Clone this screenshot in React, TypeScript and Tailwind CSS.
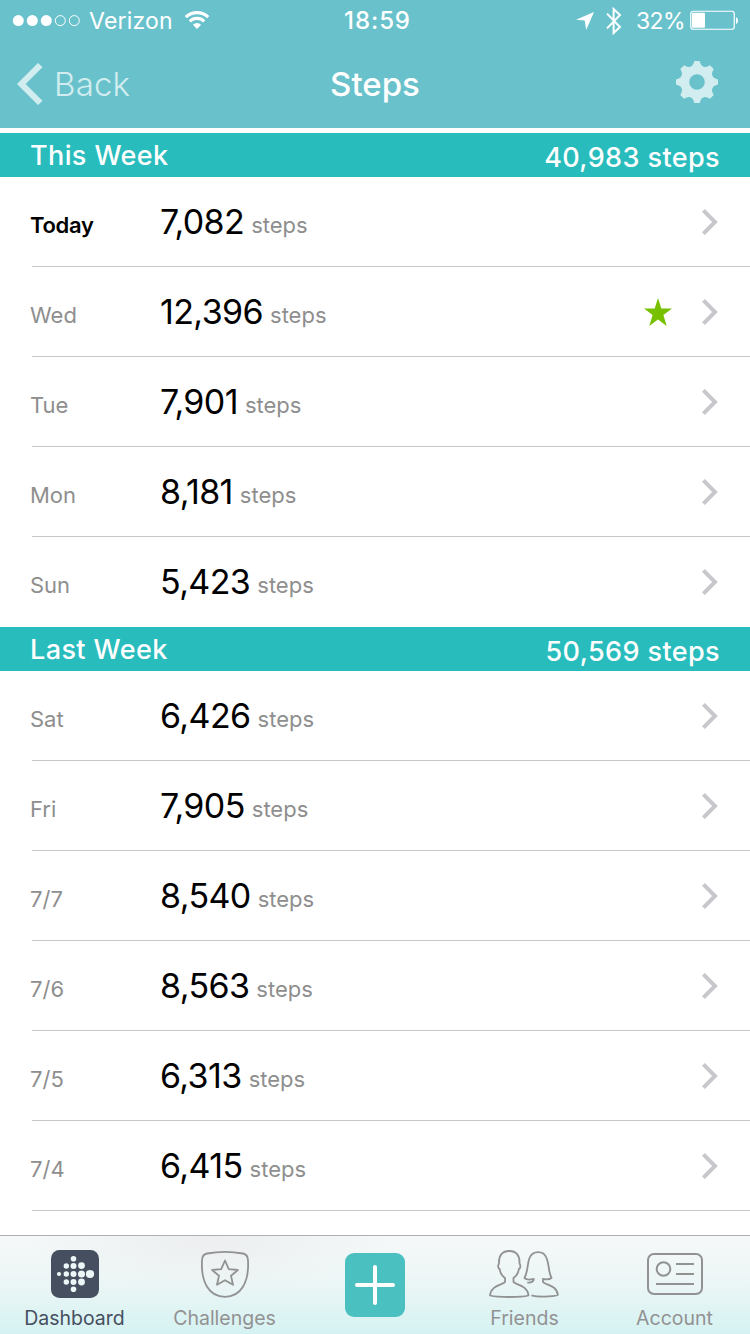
import type { ReactNode } from 'react';

interface DayEntry {
  day: string;
  steps: string;
  isToday?: boolean;
  goalMet?: boolean;
}

interface Week {
  title: string;
  total: string;
  days: DayEntry[];
}

const WEEKS: Week[] = [
  {
    title: 'This Week',
    total: '40,983 steps',
    days: [
      { day: 'Today', steps: '7,082', isToday: true },
      { day: 'Wed', steps: '12,396', goalMet: true },
      { day: 'Tue', steps: '7,901' },
      { day: 'Mon', steps: '8,181' },
      { day: 'Sun', steps: '5,423' },
    ],
  },
  {
    title: 'Last Week',
    total: '50,569 steps',
    days: [
      { day: 'Sat', steps: '6,426' },
      { day: 'Fri', steps: '7,905' },
      { day: '7/7', steps: '8,540' },
      { day: '7/6', steps: '8,563' },
      { day: '7/5', steps: '6,313' },
      { day: '7/4', steps: '6,415' },
    ],
  },
];

function StatusBar() {
  return (
    <div className="grid grid-cols-[1fr_auto_1fr] items-center h-10 pl-3 pr-[11px] text-white">
      <div className="flex items-center">
        <svg className="-mt-px" width="70" height="14" viewBox="0 0 70 14" fill="none" stroke="white">
          <circle cx="6.3" cy="7.6" r="5.5" fill="white" stroke="none" />
          <circle cx="20.3" cy="7.6" r="5.5" fill="white" stroke="none" />
          <circle cx="34.3" cy="7.6" r="5.5" fill="white" stroke="none" />
          <circle cx="48.3" cy="7.6" r="5" />
          <circle cx="62.3" cy="7.6" r="5" />
        </svg>
        <span className="ml-[7px] pt-px text-[23px] tracking-[0.2px] leading-10">Verizon</span>
        <svg className="ml-[11px] -mt-px" width="26" height="20" viewBox="0 0 26 20" fill="none" stroke="white" strokeWidth="3.2">
          <path d="M1.8 7.2A16 16 0 0 1 24.2 7.2" />
          <path d="M5.8 11.4A10.3 10.3 0 0 1 20.2 11.4" />
          <path d="M13 19L8.9 14.8A5.8 5.8 0 0 1 17.1 14.8Z" fill="white" stroke="none" />
        </svg>
      </div>
      <span className="pt-px pl-1 text-[24px] font-medium tracking-[0.9px] leading-10">18:59</span>
      <div className="flex items-center justify-end">
        <svg className="mt-px" width="18" height="18" viewBox="0 0 18 18" fill="white">
          <path d="M18 0L10.2 18L8.7 8.6L0 7.8Z" />
        </svg>
        <svg className="ml-3" width="16" height="28" viewBox="0 0 16 28" fill="none" stroke="white" strokeWidth="2">
          <path d="M1 6.6L14 20L7.6 26V2L14 8L1 21.4" />
        </svg>
        <span className="ml-3.5 pt-px text-[23px] tracking-[-0.6px] leading-10">32%</span>
        <svg className="ml-[5px] -mt-px" width="49" height="20" viewBox="0 0 49 20" fill="none">
          <rect x="0.75" y="1.25" width="43.5" height="18" rx="2.5" stroke="white" strokeWidth="1.2" />
          <rect x="2" y="2.8" width="13" height="15" rx="1" fill="white" />
          <path d="M46 7A4 4 0 0 1 46 14Z" fill="white" />
        </svg>
      </div>
    </div>
  );
}

function GearIcon() {
  return (
    <svg width="42" height="42" viewBox="-21 -21 42 42">
      <circle r="12" fill="none" stroke="#d2edef" strokeWidth="8.4" />
      {[0, 45, 90, 135, 180, 225, 270, 315].map((angle) => (
        <path
          key={angle}
          transform={`rotate(${angle})`}
          d="M-2.6 -21H2.6L3.6 -18.2Q4.3 -15.8 7.6 -14.6L5 -11H-5L-7.6 -14.6Q-4.3 -15.8 -3.6 -18.2Z"
          fill="#d2edef"
        />
      ))}
    </svg>
  );
}

function NavBar() {
  return (
    <div className="grid grid-cols-[1fr_auto_1fr] items-center h-[88px] pl-[17px] pr-8">
      <div className="flex items-center text-[#d2edef]">
        <svg width="26" height="42" viewBox="0 0 26 42" fill="currentColor">
          <path d="M21 0L25.5 4.3L8.6 21L25.5 37.7L21 42L0 21Z" />
        </svg>
        <span className="ml-[11px] font-[350] text-[33px] tracking-[0.2px] leading-[42px]">Back</span>
      </div>
      <h1 className="pl-[15px] font-medium text-[33px] leading-[42px] text-white">Steps</h1>
      <div className="flex justify-end pb-1">
        <GearIcon />
      </div>
    </div>
  );
}

function WeekHeader({ title, total }: { title: string; total: string }) {
  return (
    <div className="flex justify-between h-11 pl-[30px] pr-[31px] bg-[#28bcbd] text-white font-medium text-[27px] tracking-[0.4px] leading-[46px]">
      <h2>{title}</h2>
      <span className="pt-0.5 -mr-px">{total}</span>
    </div>
  );
}

function DayRow({ entry, last }: { entry: DayEntry; last: boolean }) {
  return (
    <li className="flex pl-8 h-[90px]">
      <div className={`flex flex-1 items-center pr-8 border-b ${last ? 'border-transparent' : 'border-[#c8c7cc]'}`}>
        <div className="flex flex-1 items-baseline -ml-0.5">
          <span className={`w-[130px] -translate-y-px text-[22px] ${entry.isToday ? 'font-semibold tracking-[-0.3px] text-black' : 'text-[#8e8e8e]'}`}>
            {entry.day}
          </span>
          <span className="text-[34px] text-black leading-[50px] tracking-[-0.6px]">{entry.steps}</span>
          <span className="ml-[7px] -translate-y-px text-[22px] text-[#8e8e8e]">steps</span>
        </div>
        {entry.goalMet && (
          <svg className="mr-[30px]" width="28" height="28" viewBox="0 0 28 28" fill="#76c000">
            <path d="M14 0L17.3 10.4H28L19.4 17L22.7 28L14 21.4L5.3 28L8.6 17L0 10.4H10.7Z" />
          </svg>
        )}
        <svg width="16" height="26" viewBox="0 0 16 26" fill="none" stroke="#c7c7cc" strokeWidth="4">
          <path d="M1.4 1.4L13 13L1.4 24.6" />
        </svg>
      </div>
    </li>
  );
}

function DashboardIcon() {
  return (
    <svg width="48" height="48" viewBox="0 0 48 48" fill="#edf7f8">
      <rect width="48" height="48" rx="8.5" fill="#464f5f" />
      <circle cx="8" cy="24" r="2.1" />
      <circle cx="15.3" cy="16" r="2.7" />
      <circle cx="15.3" cy="24" r="2.7" />
      <circle cx="15.3" cy="32" r="2.7" />
      <circle cx="22.5" cy="8.7" r="2.8" />
      <circle cx="22.5" cy="16" r="3" />
      <circle cx="22.5" cy="24" r="3" />
      <circle cx="22.5" cy="32" r="3" />
      <circle cx="22.5" cy="39.3" r="2.8" />
      <circle cx="30.5" cy="15.6" r="3.4" />
      <circle cx="30.5" cy="24" r="3.5" />
      <circle cx="30.5" cy="32" r="3.4" />
      <circle cx="39" cy="24" r="4.1" />
    </svg>
  );
}

function ChallengesIcon() {
  return (
    <svg width="48" height="48" viewBox="0 0 48 48" fill="none" stroke="#929292" strokeWidth="1.8" strokeLinejoin="round">
      <path d="M6 3.5Q24 0.2 42 3.5C45.5 4.3 47 7 47 10.5C48.2 32 40 46.8 24 46.8S-0.2 32 1 10.5C1 7 2.5 4.3 6 3.5Z" />
      <path d="M24 10.5L27.8 19.2L36.9 20L30 25.8L32 34.8L24 30.2L16 34.8L18 25.8L11.1 20L20.2 19.2Z" />
    </svg>
  );
}

function FriendsIcon() {
  return (
    <svg className="-ml-0.5" width="70" height="48" viewBox="0 0 70 48" fill="none" stroke="#929292" strokeWidth="1.8" strokeLinejoin="round">
      <path d="M16 28V32C14 35 2 35 1 45.5C9 47.5 32 47.5 39.5 45.5C38.5 35 26.5 35 24.5 32V28C28 25.5 29.5 22 29.8 19C32 18 31.5 15 30.5 13.5C31 5 27 1 20.3 1S9.5 5 10 13.5C9 15 8.5 18 10.7 19C11 22 12.5 25.5 16 28Z" />
      <path d="M38.3 32.6H40.5C43 32.3 44.8 31.5 44.8 28.8C41 29.8 37 29.5 35.5 28C39.5 20 38 14 40.5 8C44 0.2 54.5 0.2 57.5 8C60.5 15 59 21 62.5 28C60.5 29.5 57 29.5 54 29V32C56 35 68 35 68.8 45C63 47 48 47 42.5 45.3" />
    </svg>
  );
}

function AccountIcon() {
  return (
    <svg width="56" height="42" viewBox="0 0 56 42" fill="none" stroke="#929292" strokeWidth="2">
      <rect x="1" y="1" width="54" height="40" rx="6" />
      <circle cx="16.5" cy="16" r="6.8" />
      <path d="M29 11H47M29 21H47M9 31H47" />
    </svg>
  );
}

function TabItem({ label, icon, active }: { label: string; icon: ReactNode; active?: boolean }) {
  return (
    <div className={`flex flex-col items-center pt-3.5 text-[19.5px] ${active ? 'text-[#464f5f]' : 'text-[#929292]'}`}>
      <div className="flex items-center h-12">{icon}</div>
      <span className="mt-[7px] -ml-px leading-[26px]">{label}</span>
    </div>
  );
}

function TabBar() {
  return (
    <nav className="grid grid-cols-5 h-[99px] border-t border-[#adb0b1] bg-[radial-gradient(ellipse_180px_60px_at_210px_0px,#eceeef,transparent),linear-gradient(to_bottom,#f5f8f9,#edf6f6_45%,#d5f2f2)]">
      <TabItem label="Dashboard" icon={<DashboardIcon />} active />
      <TabItem label="Challenges" icon={<ChallengesIcon />} />
      <div className="flex justify-center pt-[17px]">
        <div className="flex items-center justify-center w-[60px] h-16 rounded-[9px] bg-[#4bc0c1]">
          <svg width="40" height="40" viewBox="0 0 40 40" stroke="white" strokeWidth="4" strokeLinecap="round">
            <path d="M20 2V38M2 20H38" />
          </svg>
        </div>
      </div>
      <TabItem label="Friends" icon={<FriendsIcon />} />
      <TabItem label="Account" icon={<AccountIcon />} />
    </nav>
  );
}

export default function App() {
  return (
    <div className="flex flex-col w-[750px] h-[1334px] overflow-hidden bg-white font-[Inter,sans-serif]">
      <header className="h-32 mb-[5px] bg-[#69c2cb]">
        <StatusBar />
        <NavBar />
      </header>
      <main className="flex-1">
        {WEEKS.map((week, w) => (
          <section key={week.title}>
            <WeekHeader title={week.title} total={week.total} />
            <ul>
              {week.days.map((entry, i) => (
                <DayRow key={entry.day} entry={entry} last={w === 0 && i === week.days.length - 1} />
              ))}
            </ul>
          </section>
        ))}
      </main>
      <TabBar />
    </div>
  );
}
